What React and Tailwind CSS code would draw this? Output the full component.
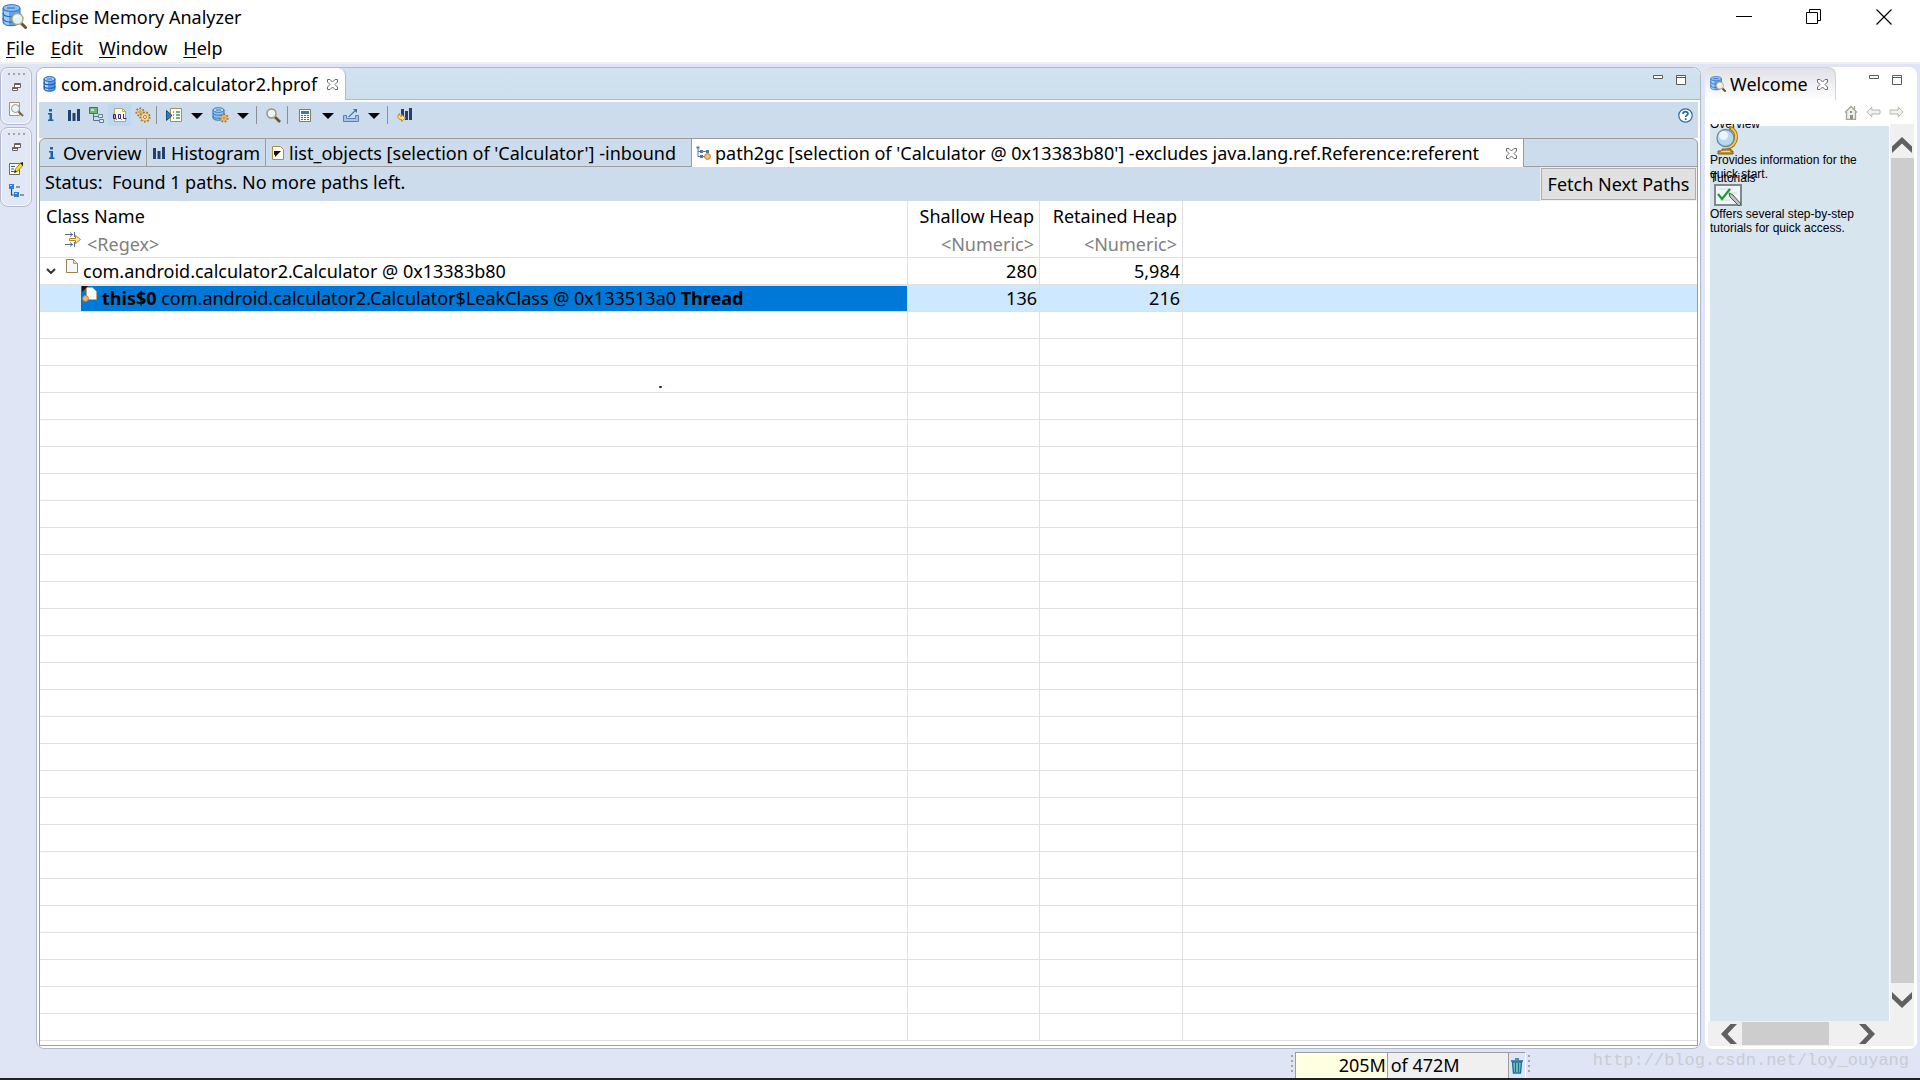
import React from 'react';

const Svg = ({ w = 16, h = 16, children, className = '' }) => (
  <svg width={w} height={h} viewBox={`0 0 ${w} ${h}`} className={`shrink-0 ${className}`} fill="none" aria-hidden="true">
    {children}
  </svg>
);

const Database = () => (
  <Svg w={13} h={16}>
    <path d="M1 3v10c0 3 11 3 11 0V3z" fill="#5b9be6" stroke="#1c5fb0" />
    <path d="M2 5v8c1 1 2 1 3 1V6z" fill="#b5dcfb" />
    <ellipse cx="6.5" cy="3" rx="5.5" ry="2.4" fill="#9fcdf7" stroke="#1c5fb0" />
    <path d="M1 6.5c0 3 11 3 11 0M1 10c0 3 11 3 11 0" stroke="#1c5fb0" strokeWidth="1.2" />
    <path d="M4 3h5" stroke="#2e74c4" />
  </Svg>
);

const MatLogo = ({ size = 25 }) => (
  <svg width={size} height={size} viewBox="0 0 25 25" fill="none" className="shrink-0" aria-hidden="true">
    <path d="M1 4v14c0 5 16 5 17 0V4z" fill="#5f9fe8" stroke="#2f70c2" />
    <path d="M2 7v11c1 2 3 3 5 3V8z" fill="#9ccdf8" />
    <ellipse cx="9.5" cy="4" rx="8.5" ry="3.4" fill="#8fc2f3" stroke="#2f70c2" />
    <path d="M5 4h8M1 9c0 5 17 5 17 0M1 14c0 4 8 5 12 3" stroke="#2a68b8" strokeWidth="1.2" />
    <path d="m19.500 19.500 4 4" stroke="#6b5234" strokeWidth="3" strokeLinecap="round" />
    <circle cx="15.500" cy="15" r="5.500" fill="#e4f3f7" stroke="#c0a46e" strokeWidth="1.400" />
    <path d="M12.500 14c1-2 3-2.500 4-2" stroke="#fff" strokeWidth="1.500" />
  </svg>
);

const CloseX = () => (
  <Svg w={11} h={11}>
    <path d="M.5.5h2.500l2.500 2.500L8 .5h2.500V3L8 5.500 10.500 8v2.500H8L5.500 8 3 10.500H.5V8L3 5.500.5 3z" fill="#fff" stroke="#6a6a6a" />
  </Svg>
);

const Info = () => (
  <Svg w={6} h={12}>
    <path d="M1 0h3v2.500H1zM0 4h4v6.500h1.500V12H0v-1.500h1.500v-5H0z" fill="#1565a8" />
  </Svg>
);

const Bars = () => (
  <Svg w={12} h={12}>
    <path d="M0 1h3v11H0zM4.500 4h3v8h-3zM9 0h3v12H9z" fill="#24406e" />
  </Svg>
);

const Tree = () => (
  <Svg w={16} h={16}>
    <path d="M4.500 7v6.500H10M4.500 9.500H9" stroke="#4d7393" />
    <path d="M.5.5h8v6h-8z" fill="#6cb877" stroke="#33833f" />
    <path d="M2 2h3v2H2z" fill="#c4e6c6" />
    <path d="M9.500 7.500h4v3h-4zM10.500 12.500h4v3h-4z" fill="#dcebf6" stroke="#5b7f9e" />
  </Svg>
);

const Oql = () => (
  <Svg w={14} h={16}>
    <path d="M1.500 1.500h8l3 3v10h-11z" fill="#f8f8f3" stroke="#bfa46b" />
    <path d="M9.500 1.500v3h3" stroke="#bfa46b" />
    <path d="M.5 7.500h2v4h-2zM5.500 7.500h2v4h-2zM2.500 11l1 1.500M7 11l1.500 1.500M10.500 7v4.500h3" stroke="#3a2b66" />
  </Svg>
);

const Gear = ({ cx, cy, r, fill }) => (
  <>
    <circle cx={cx} cy={cy} r={r} fill={fill} stroke="#a8701f" strokeWidth="2" strokeDasharray="1.6 1.6" />
    <circle cx={cx} cy={cy} r={r - 0.6} fill={fill} stroke="#b98234" strokeWidth=".5" />
    <circle cx={cx} cy={cy} r={r / 3} fill="#fffdf2" stroke="#9b651c" strokeWidth=".8" />
  </>
);

const Gears = () => (
  <Svg w={16} h={16}>
    <Gear cx={5} cy={5} r={3.6} fill="#ecdcbc" />
    <Gear cx={10} cy={10} r={4.6} fill="#f3d9a0" />
  </Svg>
);

const RunReport = () => (
  <Svg w={16} h={15}>
    <path d="M4.500.5h11v13h-11z" fill="#fffef6" stroke="#a98f55" />
    <path d="M7 4h1M7 7h1M7 10h1M10 4h4M10 7h4M10 10h4" stroke="#3a9a55" strokeWidth="1.400" />
    <path d="M.5 2.500 6 7.500l-5.500 5z" fill="#2f7fae" stroke="#174f7b" />
  </Svg>
);

const DbGear = () => (
  <Svg w={17} h={16}>
    <path d="M1 3v8c0 3 11 3 11 0V3z" fill="#8fc2f2" stroke="#2f6fb9" />
    <ellipse cx="6.500" cy="3" rx="5.500" ry="2.300" fill="#b7dcfa" stroke="#2f6fb9" />
    <path d="M4 3h5M1 6c0 3 11 3 11 0M1 9c0 2 4 2.500 7 2" stroke="#2f6fb9" />
    <Gear cx={12} cy={11} r={3.6} fill="#f3d07d" />
  </Svg>
);

const Search = () => (
  <Svg w={15} h={15}>
    <path d="m9 9 5 5" stroke="#6d5233" strokeWidth="2.600" />
    <circle cx="5.500" cy="5.500" r="4.500" fill="#eaf5f6" stroke="#a58c66" strokeWidth="1.400" />
  </Svg>
);

const Calc = () => (
  <Svg w={12} h={13}>
    <path d="M.5.5h11v12H.5z" fill="#f6f9f5" stroke="#877b5d" />
    <path d="M2 2h8v3H2z" fill="#3a7ab0" />
    <path d="M2 6h2v1H2zM5 6h2v1H5zM8 6h2v1H8zM2 8h2v1H2zM5 8h2v1H5zM8 8h2v1H8zM2 10h2v1H2zM5 10h2v1H5zM8 10h2v1H8z" fill="#2f76ad" />
  </Svg>
);

const Export = () => (
  <Svg w={16} h={13}>
    <path d="M.5 6.500h3v3h9v-3h3v6H.5z" fill="#a9c1e4" stroke="#5a7fb8" />
    <path d="m5.500 8 7-6.500" stroke="#3d7fb6" strokeWidth="1.200" />
    <path d="M10 0h4v4z" fill="#2b78b5" />
  </Svg>
);

const BarsArrow = () => (
  <Svg w={15} h={14}>
    <path d="M4 1h3v9H4zM8 3h3v9H8zM12 0h3v12h-3z" fill="#24406e" />
    <path d="M2.500 5.500C0 7 0 11.500 4.500 11.500v2l4-3.500-4-3.500v2C3 8.500 2.500 7.500 2.500 5.500z" fill="#ffe58a" stroke="#c08a1c" />
  </Svg>
);

const ObjOut = () => (
  <Svg w={12} h={14}>
    <path d="M.5.5h8l3 3v10H.5z" fill="#fffef4" stroke="#b08c3c" />
    <path d="M2 5h7L6.500 7.500 3 11V8.500L2 9z" fill="#111" />
  </Svg>
);

const PathIcon = () => (
  <Svg w={15} h={14}>
    <path d="M2 2v8.500h7M2 5.500h10" stroke="#5875a5" />
    <path d="M.5.5h3v2h-3zM4 4h3v3H4zM10 4h3v3h-3zM4 9h3v3H4z" fill="#5875a5" />
    <circle cx="11.500" cy="10.500" r="2.900" fill="#ffc266" stroke="#c5762e" />
  </Svg>
);

const FileIcon = () => (
  <Svg w={12} h={14}>
    <path d="M.5.5h7l4 4v9H.5z" fill="#f5f7fc" stroke="#9a804a" />
    <path d="M7.500.5v4h4" fill="#ead9a8" stroke="#b99a56" />
  </Svg>
);

const RootFile = () => (
  <Svg w={15} h={16}>
    <path d="M4.500 1.500h6l4 4v8h-10z" fill="#fff" stroke="#c7a766" />
    <path d="M0 0h6L0 6z" fill="#1a1410" />
    <circle cx="3.500" cy="12.500" r="2.900" fill="#ffb45f" stroke="#c5762e" />
  </Svg>
);

const FilterIcon = () => (
  <Svg w={17} h={16}>
    <path d="M0 2.500h8M5 .5l2.500 2L5 4.500M9.500 0v5M0 12.500h8M5 10.500l2.500 2-2.500 2M9.500 10v5" stroke="#5a6e88" />
    <path d="M4.500 6.500h6v-3l5 4-5 4v-3h-6z" fill="#ffe9a3" stroke="#b9831b" />
  </Svg>
);

const Minimize = () => (
  <Svg w={10} h={4}>
    <path d="M.5.5h9v3h-9z" fill="#fff" stroke="#5b5b5b" />
  </Svg>
);

const Maximize = () => (
  <Svg w={10} h={10}>
    <path d="M.5.5h9v9h-9zM0 2.500h10" fill="#fff" stroke="#5b5b5b" />
  </Svg>
);

const Restore = () => (
  <Svg w={9} h={9}>
    <path d="M2.500.5h6v4h-6zM2.500 1.500h6" fill="#fff" stroke="#6b6258" />
    <path d="M.5 4.500h5v3h-5zM.5 5.500h5" fill="#fff" stroke="#6b6258" />
  </Svg>
);

const SearchDoc = () => (
  <Svg w={15} h={15}>
    <path d="M.5.5h10v13H.5z" fill="#fdfdf4" stroke="#a3946d" />
    <path d="m9 9 5 5" stroke="#7a6245" strokeWidth="2" />
    <circle cx="6.500" cy="6.500" r="4" fill="#eaf4f6" stroke="#8d9aa0" />
  </Svg>
);

const Notes = () => (
  <Svg w={15} h={14}>
    <path d="M.5 1.500h10v11H.5z" fill="#fdfdf6" stroke="#6d6a5c" />
    <path d="M2 4.500h4M2 7h3M2 9.500h3" stroke="#3c5d8c" />
    <path d="m5.500 10 1-3L11.500 1l2.500 2L9 9z" fill="#ffe01f" stroke="#8a7614" strokeWidth=".8" />
    <path d="m11 1 3-1v4zM5 11l1-3 2 2z" fill="#222" />
  </Svg>
);

const NavTree = () => (
  <Svg w={15} h={14}>
    <path d="M2.500 5v6H6M7 3h4M11 11h4" stroke="#39424f" strokeWidth="1.200" />
    <path d="M0 0h5v5H0zM5 8h5v5H5z" fill="#2f7fd6" />
    <path d="M1 1h2v1H1zM6 9h2v1H6z" fill="#bfe0ff" />
  </Svg>
);

const Globe = () => (
  <Svg w={28} h={29} className="ml-[4px]">
    <path d="M16 2c9 3 8 17-3 20" stroke="#a87a16" strokeWidth="4" />
    <path d="M16 2c9 3 8 17-3 20" stroke="#efca54" strokeWidth="2" />
    <path d="M16 0v4" stroke="#a87a16" strokeWidth="2" />
    <circle cx="11.500" cy="12" r="8.500" fill="#b5d9f3" stroke="#6f8795" strokeWidth="1.300" />
    <circle cx="9.500" cy="9.500" r="4.500" fill="#e9f6ff" />
    <path d="M8 23h9v2h2v3H4v-3h4z" fill="#c8952c" stroke="#7d5a12" />
    <path d="M7 25.500h9" stroke="#f5df8b" />
  </Svg>
);

const Tutorial = () => (
  <Svg w={28} h={22} className="ml-[4px]">
    <path d="M1 1h26v20H1z" fill="#eef6f8" stroke="#82898a" strokeWidth="2" />
    <path d="M5 5h14M6 16h10M15 9h8" stroke="#cfd9da" />
    <path d="m4 10 4 5 8-10" stroke="#1f9a2c" strokeWidth="2.200" />
    <path d="m15 9 4 2 8 9-2 2-9-9z" fill="#b7c7c0" stroke="#4b5e57" />
  </Svg>
);

const Home = () => (
  <Svg w={14} h={15}>
    <path d="M2.500 7v7.500h9V7L7 2.500z" fill="#efefe9" />
    <path d="M1 7.500 7 1.500l6 6M2.500 7v7.500h9V7M10.500 1v3" stroke="#a3a39c" strokeWidth="1.300" />
    <path d="M6 10h3v4H6zM6 6h2v2H6z" fill="#90908a" />
  </Svg>
);

const NavArrow = ({ flip }) => (
  <Svg w={15} h={12} className={flip ? 'rotate-180' : ''}>
    <path d="m.8 6 5-5v3H14v4H5.800v3z" fill="#f2f2ec" stroke="#b4b4ac" />
  </Svg>
);

const Chevron = ({ className }) => (
  <Svg w={20} h={16} className={className}>
    <path d="M10 0 20 9.500V16L10 6.500 0 16V9.500z" fill="#606060" />
  </Svg>
);

const Dropdown = ({ label }) => (
  <button aria-label={label} className="flex h-[24px] w-[22px] items-center justify-center">
    <Svg w={12} h={6}><path d="M0 0h12L6 6z" fill="#000" /></Svg>
  </button>
);

const Tool = ({ label, wide, active, children }) => (
  <button
    aria-label={label}
    className={`flex h-[22px] items-center justify-center ${wide ? 'w-[24px]' : 'w-[23px]'} ${active ? 'bg-[#bfd8f2]' : ''}`}
  >
    {children}
  </button>
);

const Sep = () => <span className="mt-[2px] mr-[5px] ml-[2px] h-[18px] w-px bg-[#8b8f94]" />;

const Dots = () => (
  <span className="flex gap-[3px]">
    {[0, 1, 2, 3].map((i) => <i key={i} className="h-[2px] w-[2px] bg-[#a9a498]" />)}
  </span>
);

const VDots = () => (
  <span className="flex flex-col gap-[3px]">
    {[0, 1, 2, 3].map((i) => <i key={i} className="h-[2px] w-[2px] bg-[#a9a498]" />)}
  </span>
);

const Menu = ({ text }) => (
  <button><span className="underline underline-offset-2">{text[0]}</span>{text.slice(1)}</button>
);

const TrimBox = ({ children }) => (
  <div className="flex w-[32px] flex-col items-center rounded-lg border border-[#b4bace] bg-[#e2e7f6] pt-[5px] shadow-[inset_0_0_0_1px_#f6f8fd]">
    {children}
  </div>
);

const Tab = ({ icon, text, width }) => (
  <button
    role="tab"
    aria-selected="false"
    className={`flex h-[28px] items-center whitespace-pre border-r border-b border-[#9d9d9d] ${width}`}
  >
    {icon}{text}
  </button>
);

const numCell = 'border-r border-b border-[#e0e0e0] pr-[2px] text-right';
const plainCell = 'border-r border-b border-[#e0e0e0]';

function HeapTable() {
  return (
    <table className="w-full table-fixed border-separate border-spacing-0 bg-white leading-[26px]">
      <colgroup>
        <col className="w-[868px]" />
        <col className="w-[132px]" />
        <col className="w-[143px]" />
        <col />
      </colgroup>
      <thead>
        <tr className="h-[57px] align-top">
          <th className="border-r border-b border-[#e0e0e0] pt-[2px] pl-[6px] text-left font-normal">
            <div>Class Name</div>
            <div className="flex pl-[19px] text-[#808080]">
              <span className="pt-[3px]"><FilterIcon /></span>
              <span className="pt-[2px] pl-[5px]">&lt;Regex&gt;</span>
            </div>
          </th>
          {['Shallow Heap', 'Retained Heap'].map((t) => (
            <th key={t} className="border-r border-b border-[#e0e0e0] pt-[2px] pr-[5px] text-right font-normal">
              <div>{t}</div>
              <div className="pt-[2px] text-[#808080]">&lt;Numeric&gt;</div>
            </th>
          ))}
          <th className="border-b border-[#e0e0e0]" />
        </tr>
      </thead>
      <tbody>
        <tr className="h-[27px]">
          <td className={plainCell}>
            <div className="flex h-[26px] pl-[6px]">
              <button aria-label="Collapse" className="flex items-center">
                <Svg w={10} h={6}><path d="m1 1 4 4 4-4" stroke="#333" strokeWidth="2" /></Svg>
              </button>
              <span className="pt-[1px] pl-[10px]"><FileIcon /></span>
              <span className="pl-[5px]">com.android.calculator2.Calculator @ 0x13383b80</span>
            </div>
          </td>
          <td className={numCell}>280</td>
          <td className={numCell}>5,984</td>
          <td className="border-b border-[#e0e0e0]" />
        </tr>
        <tr className="h-[27px] bg-[#cde8ff]">
          <td className={plainCell}>
            <div className="ml-[41px] flex h-[25px] bg-[#0078d7]">
              <span className="pr-[5px] pl-[1px]"><RootFile /></span>
              <span className="leading-[24px] whitespace-pre"><b>this$0</b> com.android.calculator2.Calculator$LeakClass @ 0x133513a0 <b>Thread</b></span>
            </div>
          </td>
          <td className={numCell}>136</td>
          <td className={numCell}>216</td>
          <td className="border-b border-[#e0e0e0]" />
        </tr>
        {Array.from({ length: 27 }, (_, i) => (
          <tr key={i} className="h-[27px] align-bottom">
            <td className={plainCell}>
              {i === 2 && <i className="mb-[4px] ml-[619px] block h-[2px] w-[3px] rounded-full bg-[#20206a]" />}
            </td>
            <td className={plainCell} />
            <td className={plainCell} />
            <td className="border-b border-[#e0e0e0]" />
          </tr>
        ))}
      </tbody>
    </table>
  );
}

function Editor() {
  return (
    <main className="flex min-w-0 flex-1 flex-col rounded-lg border border-[#b0b8cc] bg-white">
      <div className="flex h-[32px] rounded-t-lg bg-gradient-to-b from-[#d2e2f0] to-[#cddfec]">
        <div role="tab" className="flex w-[309px] items-center gap-[5px] rounded-t-lg border-r border-[#b0b8cc] bg-white pl-[6px]">
          <Database />
          <span className="w-[261px]">com.android.calculator2.hprof</span>
          <button aria-label="Close editor"><CloseX /></button>
        </div>
        <div className="flex flex-1 items-start justify-end gap-[13px] border-b border-[#b0b8cc] pt-[7px] pr-[14px]">
          <button aria-label="Minimize"><Minimize /></button>
          <button aria-label="Maximize"><Maximize /></button>
        </div>
      </div>
      <div className="flex flex-1 flex-col p-[2px]">
        <div className="flex h-[36px] items-start bg-[#ccdcec] pt-[2px]">
          <Tool label="Overview"><Info /></Tool>
          <Tool label="Histogram"><Bars /></Tool>
          <Tool label="Dominator tree"><Tree /></Tool>
          <Tool label="OQL" active><Oql /></Tool>
          <Tool label="Thread overview"><Gears /></Tool>
          <Sep />
          <Tool label="Run report" wide><RunReport /></Tool>
          <Dropdown label="Report menu" />
          <Tool label="Query browser" wide><DbGear /></Tool>
          <Dropdown label="Query menu" />
          <Sep />
          <Tool label="Find object"><Search /></Tool>
          <Sep />
          <Tool label="Calculate retained size" wide><Calc /></Tool>
          <Dropdown label="Calculate menu" />
          <Tool label="Export" wide><Export /></Tool>
          <Dropdown label="Export menu" />
          <Sep />
          <Tool label="Compare"><BarsArrow /></Tool>
          <button aria-label="Help" className="mt-[4px] mr-[5px] ml-auto">
            <Svg w={15} h={15}>
              <circle cx="7.500" cy="7.500" r="6.700" fill="#fff" stroke="#2c6aa8" strokeWidth="1.200" />
              <path d="M5 6c0-3 5-3 5-.3 0 1.600-2.300 1.500-2.300 3.300M6.800 11.200h1.800" stroke="#2c6aa8" strokeWidth="1.700" />
            </Svg>
          </button>
        </div>
        <div className="flex flex-1 flex-col rounded-t-md border border-[#9d9d9d] bg-[#ccdcec]">
          <div role="tablist" className="flex">
            <Tab width="w-[107px] gap-[8px] pl-[9px]" icon={<Info />} text="Overview" />
            <Tab width="w-[119px] gap-[6px] pl-[6px]" icon={<Bars />} text="Histogram" />
            <Tab width="w-[426px] gap-[5px] pl-[6px]" icon={<ObjOut />} text="list_objects [selection of 'Calculator'] -inbound" />
            <div role="tab" aria-selected="true" className="flex h-[28px] w-[832px] items-center whitespace-pre border-r border-[#9d9d9d] bg-white pr-[6px] pl-[4px]">
              <PathIcon />
              <span className="flex-1 pl-[4px]">path2gc [selection of 'Calculator @ 0x13383b80'] -excludes java.lang.ref.Reference:referent</span>
              <button aria-label="Close tab"><CloseX /></button>
            </div>
            <div className="flex-1 border-b border-[#9d9d9d]" />
          </div>
          <div className="flex h-[34px] items-start justify-between">
            <span className="pl-[5px] leading-[30px] whitespace-pre">Status:  Found 1 paths. No more paths left.</span>
            <div className="flex h-[34px] bg-[#f0f0f0] p-px">
              <button className="w-[155px] border border-[#adadad] bg-[#e1e1e1] leading-[30px]">Fetch Next Paths</button>
            </div>
          </div>
          <div className="flex-1 bg-white"><HeapTable /></div>
        </div>
      </div>
    </main>
  );
}

function Welcome() {
  return (
    <aside className="mr-[3px] ml-[4px] flex w-[212px] flex-col rounded-lg bg-white">
      <div className="flex h-[33px]">
        <div role="tab" className="flex w-[131px] items-center gap-[4px] rounded-t-lg border-t border-r border-[#d0d3da] bg-gradient-to-b from-[#e0e1e6] to-white pl-[5px]">
          <MatLogo size={16} />
          <span className="w-[83px]">Welcome</span>
          <button aria-label="Close Welcome"><CloseX /></button>
        </div>
        <div className="flex flex-1 items-start justify-end gap-[13px] pt-[8px] pr-[15px]">
          <button aria-label="Minimize view"><Minimize /></button>
          <button aria-label="Maximize view"><Maximize /></button>
        </div>
      </div>
      <div className="flex h-[24px] items-center justify-end gap-[8px] pr-[13px]">
        <button aria-label="Home"><Home /></button>
        <button aria-label="Back"><NavArrow /></button>
        <button aria-label="Forward"><NavArrow flip /></button>
      </div>
      <div className="flex flex-1 pr-[3px] pl-[5px]">
        <div className="flex-1 overflow-hidden bg-[linear-gradient(#fff_2px,#d7e5ef_2px)] pr-4 font-['Liberation_Sans',sans-serif] text-xs leading-[14px]">
          <a href="#overview" className="block">
            <div className="-mt-[7px]">Overview</div>
            <div className="-mt-[5px] h-[29px]"><Globe /></div>
            <p className="-mt-[2px]">Provides information for the quick start.</p>
          </a>
          <a href="#tutorials" className="block">
            <div className="-mt-[10px]">Tutorials</div>
            <div className="-mt-px h-[23px]"><Tutorial /></div>
            <p>Offers several step-by-step tutorials for quick access.</p>
          </a>
        </div>
        <div className="flex w-[25px] flex-col items-center border-l border-white bg-[#f0f0f0]">
          <button aria-label="Scroll up" className="flex h-[34px] items-end pb-[5px]"><Chevron /></button>
          <div className="w-[23px] flex-1 bg-[#cdcdcd]" />
          <button aria-label="Scroll down" className="flex h-[38px] items-start pt-[9px]"><Chevron className="rotate-180" /></button>
        </div>
      </div>
      <div className="mr-[3px] mb-[3px] ml-[3px] flex h-[25px] items-center bg-[#f0f0f0]">
        <button aria-label="Scroll left" className="flex w-[34px] justify-end pr-[3px]"><Chevron className="-rotate-90" /></button>
        <div className="h-[23px] w-[87px] bg-[#cdcdcd]" />
        <button aria-label="Scroll right" className="flex w-[60px] justify-center pl-[16px]"><Chevron className="rotate-90" /></button>
      </div>
    </aside>
  );
}

export default function App() {
  return (
    <div className="flex min-h-screen flex-col bg-[#dfe5f5] font-['Noto_Sans','Open_Sans',sans-serif] text-lg leading-6 text-black">
      <header className="border-b-2 border-[#f0f0f0] bg-white">
        <div className="flex h-[33px] items-center justify-between pr-[28px] pl-[2px]">
          <h1 className="flex items-center gap-[4px]"><MatLogo />Eclipse Memory Analyzer</h1>
          <div className="flex items-center gap-[54px]">
            <button aria-label="Minimize window"><Svg w={16} h={16}><path d="M0 7.500h16" stroke="#000" /></Svg></button>
            <button aria-label="Restore window"><Svg w={16} h={16}><path d="M.5 3.500h11v11H.5zM3.500 3.500v-3h11v11h-3" stroke="#000" /></Svg></button>
            <button aria-label="Close window"><Svg w={16} h={16}><path d="m.5.5 15 15M15.500.5l-15 15" stroke="#000" strokeWidth="1.200" /></Svg></button>
          </div>
        </div>
        <nav className="flex h-[29px] items-center gap-[16px] pl-[6px]">
          {['File', 'Edit', 'Window', 'Help'].map((t) => <Menu key={t} text={t} />)}
        </nav>
      </header>
      <div className="flex flex-1 pt-[3px]">
        <div className="flex w-[36px] flex-col gap-[2px]">
          <TrimBox>
            <Dots />
            <button aria-label="Restore" className="mt-[8px]"><Restore /></button>
            <button aria-label="Search view" className="mt-[10px] mb-[7px]"><SearchDoc /></button>
          </TrimBox>
          <TrimBox>
            <Dots />
            <button aria-label="Restore views" className="mt-[8px]"><Restore /></button>
            <button aria-label="Notes" className="mt-[10px]"><Notes /></button>
            <button aria-label="Navigation history" className="mt-[8px] mb-[8px]"><NavTree /></button>
          </TrimBox>
        </div>
        <Editor />
        <Welcome />
      </div>
      <footer className="flex h-[31px] items-center justify-end border-b-2 border-[#202124] pr-[11px]">
        <VDots />
        <div className="ml-[2px] flex h-[26px] w-[213px] self-end border-t border-l border-[#9d9d9d] bg-[linear-gradient(90deg,#ffffe1_91px,#9d9d9d_91px,#9d9d9d_92px,#f0f0f0_92px)]">
          <span className="w-full pl-[43px]">205M of 472M</span>
        </div>
        <button aria-label="Run garbage collector" className="flex h-[26px] w-[18px] items-center justify-center self-end border-t border-r border-l border-[#9d9d9d] border-r-white">
          <Svg w={12} h={16}>
            <path d="M1.500 4h9l-1 11h-7z" fill="#7fd0b8" stroke="#1c6f9c" strokeWidth="1.400" />
            <path d="M0 3h12M4 1h4M4.500 5v9M7.500 5v9" stroke="#1c6f9c" strokeWidth="1.400" />
          </Svg>
        </button>
        <span className="ml-[2px]"><VDots /></span>
        <span className="ml-[63px] self-start font-['Liberation_Mono',monospace] text-[17px] text-[#c8ccd3]">http://blog.csdn.net/loy_ouyang</span>
      </footer>
    </div>
  );
}
